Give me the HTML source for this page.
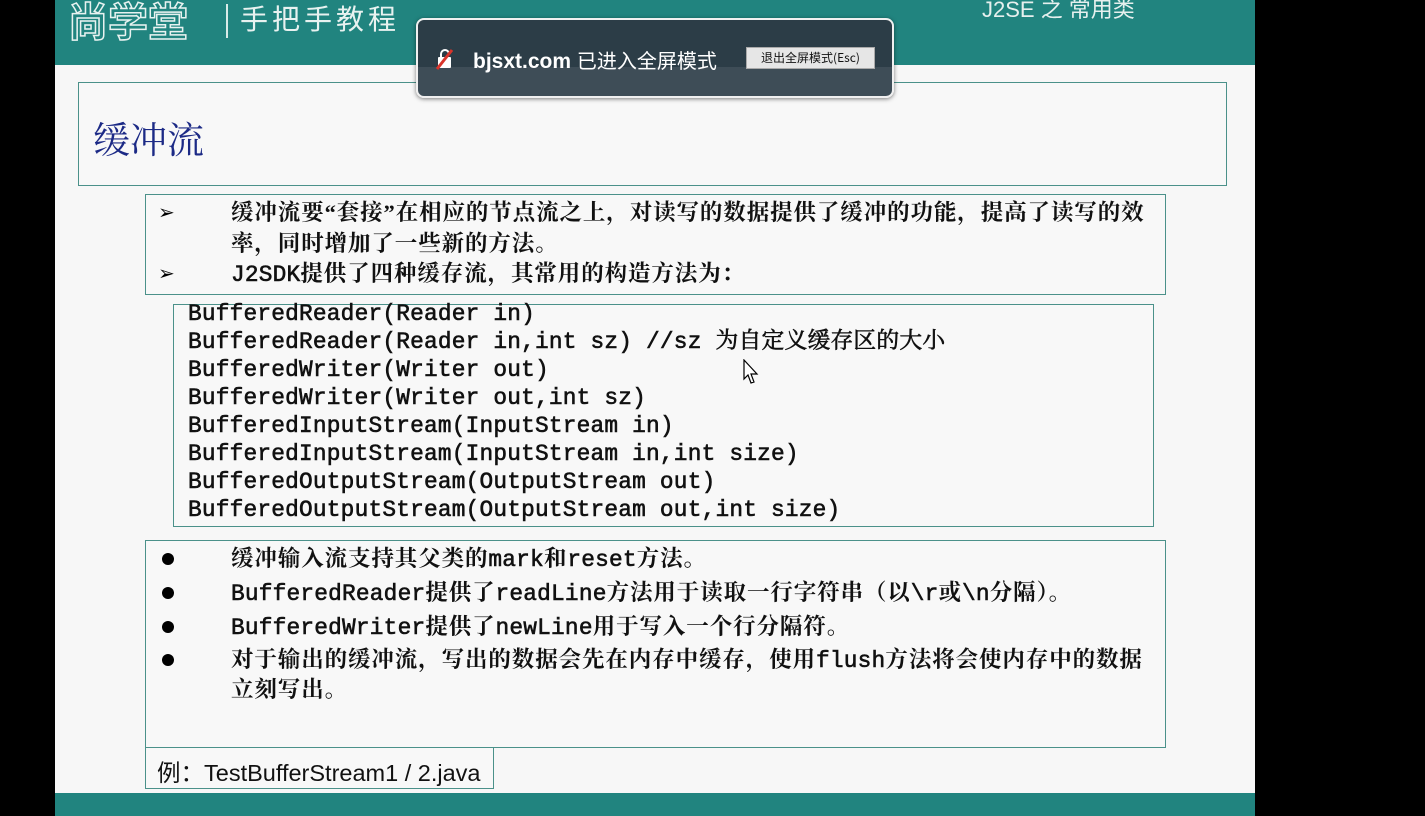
<!DOCTYPE html>
<html><head><meta charset="utf-8"><style>
*{margin:0;padding:0;box-sizing:border-box}
body{width:1425px;height:816px;background:#000;position:relative;overflow:hidden;font-family:"Liberation Sans","Noto Sans CJK SC",sans-serif}
.slide{position:absolute;left:55px;top:0;width:1200px;height:816px;background:#f7f7f7}
.hdr{position:absolute;left:55px;top:0;width:1200px;height:65px;background:#21847f}
.ftr{position:absolute;left:55px;top:793px;width:1200px;height:23px;background:#21847f}
.box{position:absolute;border:1.5px solid #4b918a;background:#f8f8f8}
.t{position:absolute;white-space:nowrap;font-family:"Liberation Serif","Noto Serif CJK SC",serif;font-weight:700;font-size:22.5px;letter-spacing:0.9px;color:#111;line-height:30px}
.m{font-family:"Liberation Mono","Noto Serif CJK SC",monospace;font-weight:400;font-size:22.8px;letter-spacing:0.2px;-webkit-text-stroke:0.6px #111}
.code{position:absolute;left:188px;font-family:"Liberation Mono","Noto Serif CJK SC",monospace;font-weight:400;-webkit-text-stroke:0.6px #111;font-size:22.8px;letter-spacing:0.2px;color:#111;white-space:nowrap;line-height:28px}
.bul{position:absolute;width:12px;height:12px;border-radius:50%;background:#000;left:162px}
.arr{position:absolute;left:158px;font-size:20px;color:#000;font-family:"DejaVu Sans",sans-serif}
</style></head><body>
<div class="slide"></div>
<div class="hdr"></div>
<div style="position:absolute;left:68px;top:-10px;color:#21847f;font:700 40px 'Noto Sans CJK SC',sans-serif;letter-spacing:0px;-webkit-text-stroke:1.5px #e8f2f0">尚学堂</div>
<div style="position:absolute;left:226px;top:4px;width:2px;height:34px;background:#d8ebe8"></div>
<div style="position:absolute;left:240px;top:-2px;color:#e8f2f0;font:400 28px 'Noto Sans CJK SC',sans-serif;letter-spacing:4px">手把手教程</div>
<div style="position:absolute;left:982px;top:-8px;color:#e6f0ee;font:400 22px 'Liberation Sans','Noto Sans CJK SC',sans-serif">J2SE 之 常用类</div>
<div class="ftr"></div>

<div class="box" style="left:78px;top:82px;width:1149px;height:104px"></div>
<div style="position:absolute;left:93px;top:110px;font:400 37px 'Noto Serif CJK SC',serif;color:#1c2a86">缓冲流</div>

<div class="box" style="left:145px;top:194px;width:1021px;height:101px"></div>
<div class="arr" style="top:200px">➢</div>
<div class="t" style="left:231px;top:198px">缓冲流要“套接”在相应的节点流之上，对读写的数据提供了缓冲的功能，提高了读写的效</div>
<div class="t" style="left:231px;top:229px">率，同时增加了一些新的方法。</div>
<div class="arr" style="top:261px">➢</div>
<div class="t" style="left:231px;top:259px"><span class="m">J2SDK</span>提供了四种缓存流，其常用的构造方法为：</div>

<div class="box" style="left:173px;top:304px;width:981px;height:223px"></div>
<div class="code" style="top:300px">BufferedReader(Reader in)<br>BufferedReader(Reader in,int sz) //sz 为自定义缓存区的大小<br>BufferedWriter(Writer out)<br>BufferedWriter(Writer out,int sz)<br>BufferedInputStream(InputStream in)<br>BufferedInputStream(InputStream in,int size)<br>BufferedOutputStream(OutputStream out)<br>BufferedOutputStream(OutputStream out,int size)</div>
<svg style="position:absolute;left:743px;top:359px" width="16" height="26" viewBox="0 0 16 26"><path d="M1 1 L1 20 L5 16 L8 24 L11 23 L8 15 L14 15 Z" fill="#fff" stroke="#000" stroke-width="1.2"/></svg>

<div class="box" style="left:145px;top:540px;width:1021px;height:208px"></div>
<div class="bul" style="top:553px"></div>
<div class="t" style="left:231px;top:544px">缓冲输入流支持其父类的<span class="m">mark</span>和<span class="m">reset</span>方法。</div>
<div class="bul" style="top:587px"></div>
<div class="t" style="left:231px;top:578px"><span class="m">BufferedReader</span>提供了<span class="m">readLine</span>方法用于读取一行字符串（以<span class="m">\r</span>或<span class="m">\n</span>分隔）。</div>
<div class="bul" style="top:621px"></div>
<div class="t" style="left:231px;top:612px"><span class="m">BufferedWriter</span>提供了<span class="m">newLine</span>用于写入一个行分隔符。</div>
<div class="bul" style="top:654px"></div>
<div class="t" style="left:231px;top:645px">对于输出的缓冲流，写出的数据会先在内存中缓存，使用<span class="m">flush</span>方法将会使内存中的数据</div>
<div class="t" style="left:231px;top:675px">立刻写出。</div>

<div class="box" style="left:145px;top:747px;width:349px;height:42px"></div>
<div style="position:absolute;left:157px;top:754px;font:400 23.5px 'Liberation Sans','Noto Sans CJK SC',sans-serif;color:#111;letter-spacing:0px">例：TestBufferStream1 / 2.java</div>

<div style="position:absolute;left:416px;top:18px;width:478px;height:80px;border-radius:8px;border:2px solid #f0f0f0;background:linear-gradient(#2c3d47 0,#2c3d47 62%,#3e4d57 62%,#3e4d57 100%);box-shadow:0 1px 4px rgba(0,0,0,.5)"></div>
<svg style="position:absolute;left:434px;top:48px" width="22" height="22" viewBox="0 0 22 22"><rect x="4" y="9" width="13" height="11" rx="1" fill="#fff"/><path d="M7 9 V6 a4 4 0 0 1 8 0" fill="none" stroke="#fff" stroke-width="2"/><path d="M3 21 L18 2" stroke="#d9342b" stroke-width="3"/></svg>
<div style="position:absolute;left:473px;top:45px;color:#fff;font:700 21px 'Liberation Sans',sans-serif">bjsxt.com <span style="font-weight:400;font-family:'Noto Sans CJK SC',sans-serif;font-size:20px">已进入全屏模式</span></div>
<div style="position:absolute;left:746px;top:47px;width:129px;height:22px;background:#e6e6e6;border:1px solid #aaa;font:400 12px 'Noto Sans CJK SC',sans-serif;color:#111;text-align:center;line-height:20px">退出全屏模式(Esc)</div>
</body></html>
